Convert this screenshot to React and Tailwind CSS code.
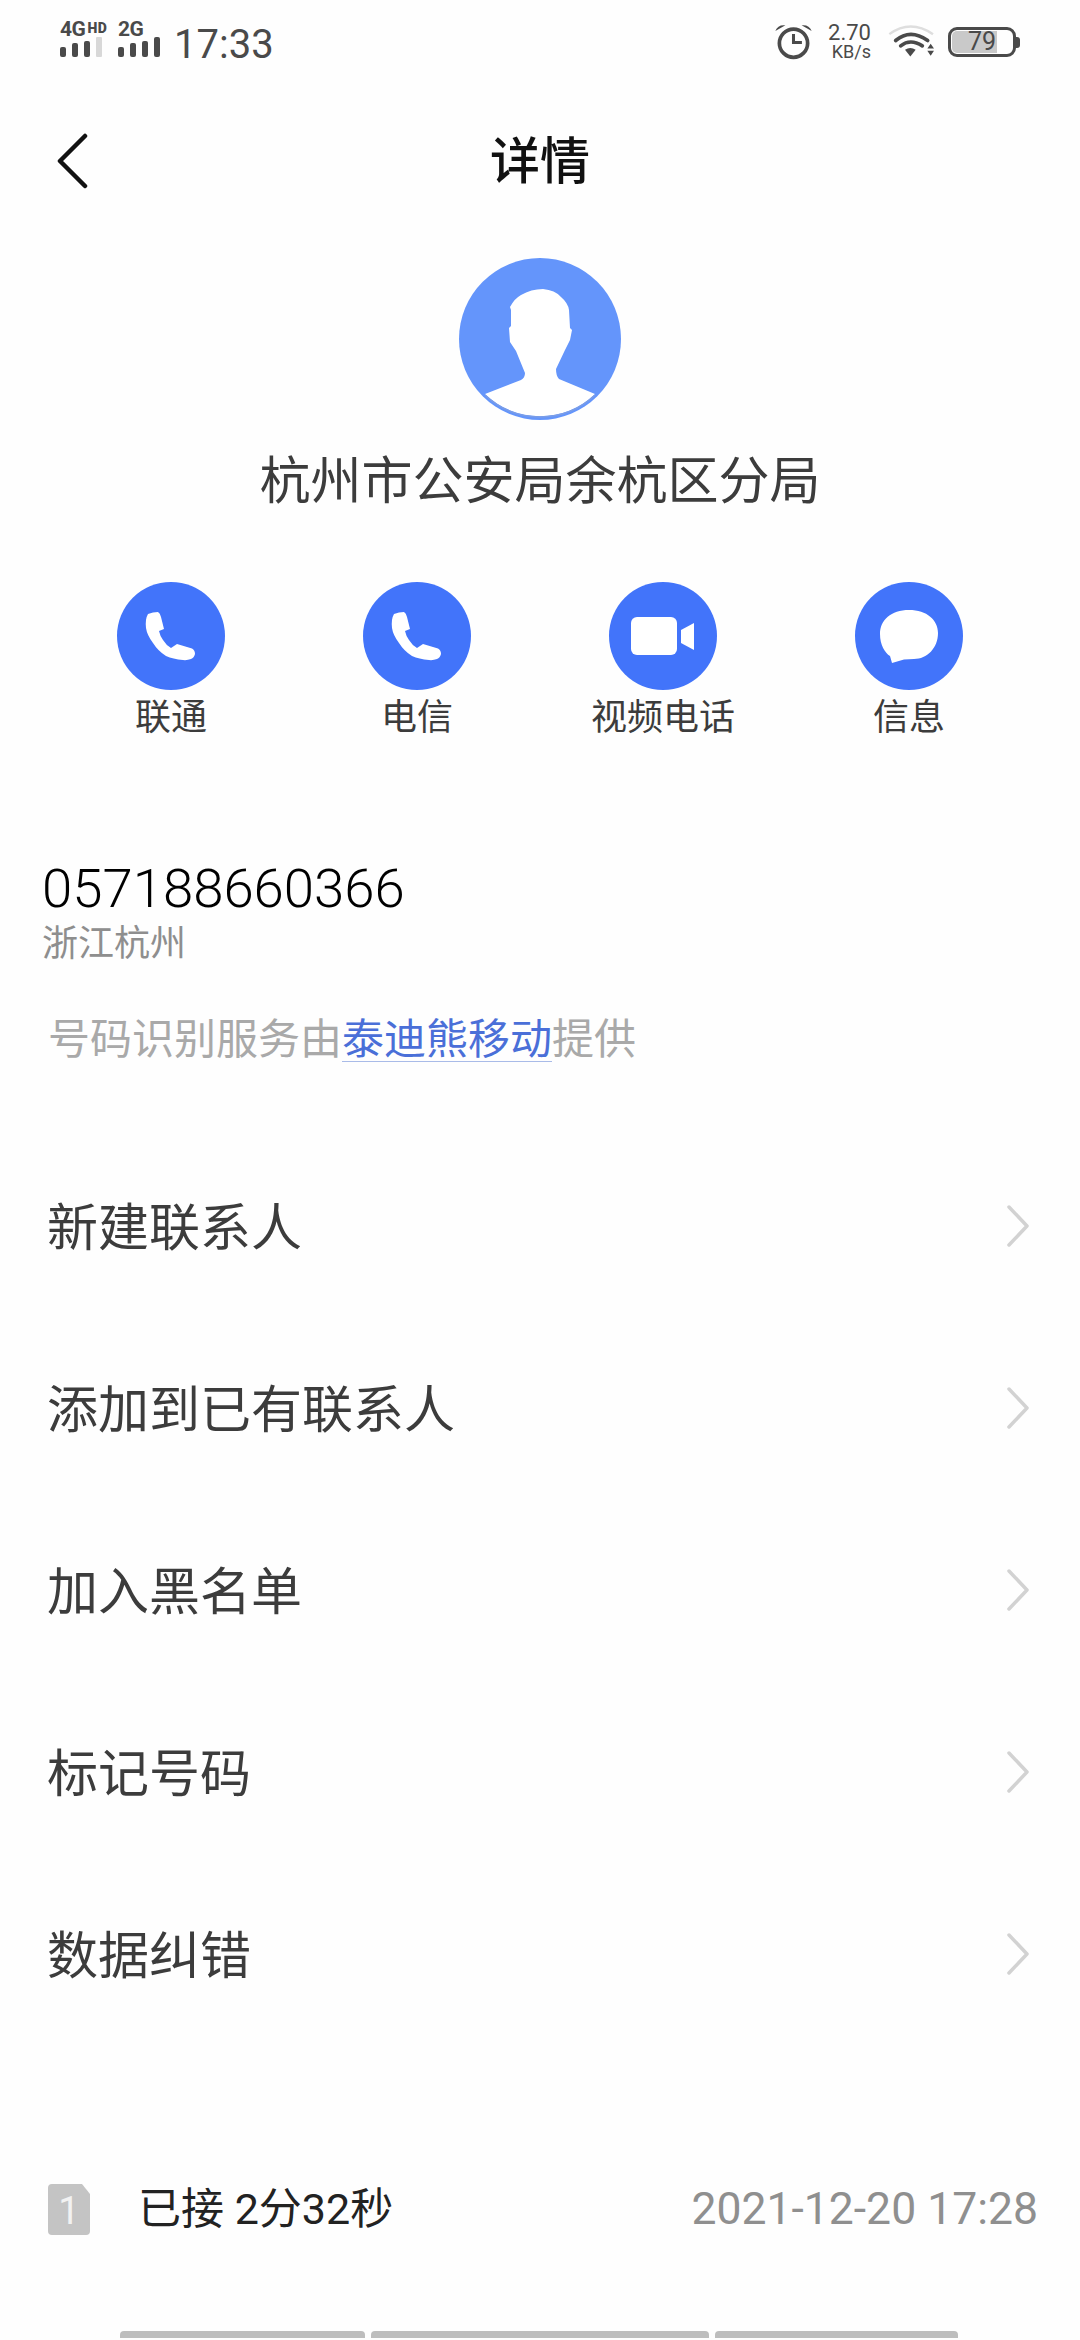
import React from 'react';

const CJK = "font-['Roboto','Noto_Sans_CJK_SC',sans-serif]";

const PhoneIcon = () => (
  <svg viewBox="0 0 108 108" className="w-[108px] h-[108px]">
    <path
      fill="#fff"
      d="M31 32 Q36 30 41 30 Q43 31 44 35 L47 47 L42 49 Q43 54 46 58 Q49 63 54 66 L60 62 L75 66.5 Q78 68 78 72 Q77 76 74 77 Q70 78.5 66 78 Q56 77 49 74 Q41 69 36 61 Q30 53 29 46 Q28 37 31 32 Z"
    />
  </svg>
);

const VideoIcon = () => (
  <svg viewBox="0 0 108 108" className="w-[108px] h-[108px]">
    <rect x="22" y="35" width="46" height="38" rx="6" fill="#fff" />
    <path d="M72 48 L85 41 V68 L72 61 Z" fill="#fff" />
  </svg>
);

const MessageIcon = () => (
  <svg viewBox="0 0 108 108" className="w-[108px] h-[108px]">
    <path
      fill="#fff"
      d="M54 28 C72 28 83 38 83 51 C83 66 72 77 59 77 L49 77.5 L37 81 L35 74 C30 71 25 63 25 52 C25 38 36 28 54 28 Z"
    />
  </svg>
);

const Avatar = () => (
  <svg viewBox="0 0 162 162" className="w-[162px] h-[162px]">
    <circle cx="81" cy="81" r="81" fill="#6495fb" />
    <path
      fill="#fff"
      d="M26 136 L62 122 Q66 120 66 115 L57 93 L51 84 L50 70 L52 68 L52 52 L51 49 Q56 40 62 37 Q72 31 84 31 Q96 32 102 39 Q109 45 110 52 L111 70 L113 72 L111 82 L106 92 L97 111 Q97 118 100 121 L136 136 A79 79 0 0 1 26 136 Z"
    />
    <path d="M26 137 A80 80 0 0 0 136 137" fill="none" stroke="#7b9de6" strokeWidth="1.5" />
  </svg>
);

const actions = [
  { label: '联通', icon: <PhoneIcon /> },
  { label: '电信', icon: <PhoneIcon /> },
  { label: '视频电话', icon: <VideoIcon /> },
  { label: '信息', icon: <MessageIcon /> },
];

const menu = ['新建联系人', '添加到已有联系人', '加入黑名单', '标记号码', '数据纠错'];

const Signal = ({ dim }) => (
  <div className="flex items-end gap-[6px] h-[20px]">
    <span className="w-[6px] h-[10px] rounded-[2px] bg-[#4a4a4a]" />
    <span className="w-[6px] h-[14px] rounded-[2px] bg-[#4a4a4a]" />
    <span className="w-[6px] h-[16px] rounded-[2px] bg-[#4a4a4a]" />
    <span className={dim ? 'w-[6px] h-[20px] rounded-[1px] bg-[#d8d8d8]' : 'w-[6px] h-[20px] rounded-[2px] bg-[#4a4a4a]'} />
  </div>
);

const StatusBar = () => (
  <div className="h-[80px] flex justify-between pt-[22px] pl-[60px] pr-[60px] text-[#4a4a4a] font-['Roboto',sans-serif]">
    <div className="flex items-start">
      <div className="w-[58px] flex flex-col">
        <div className="h-[15px] flex items-start font-bold leading-[15px]">
          <span className="text-[21px] tracking-[-0.5px]">4G</span>
          <span className="text-[14px] ml-[2px] font-black leading-[12px] tracking-[0.5px]">HD</span>
        </div>
        <Signal dim />
      </div>
      <div className="w-[58px] flex flex-col">
        <span className="h-[15px] text-[21px] font-bold leading-[15px] tracking-[-0.5px]">2G</span>
        <Signal />
      </div>
      <span className="text-[40px] leading-[42px] ml-[-2px] mt-[2px]">17:33</span>
    </div>

    <div className="flex items-start">
      <svg viewBox="165 70 110 110" className="w-[37px] h-[37px] mt-[1px]">
        <circle cx="220" cy="130" r="42" fill="none" stroke="#4a4a4a" strokeWidth="11" />
        <path d="M220 103 V128 H245" fill="none" stroke="#4a4a4a" strokeWidth="9" />
        <path d="M166 94 Q174 74 196 77 Z M274 94 Q266 74 244 77 Z" fill="#4a4a4a" />
      </svg>
      <div className="w-[47px] ml-[12px] flex flex-col items-end leading-none">
        <span className="text-[22px] leading-[22px]">2.70</span>
        <span className="text-[18px] leading-[18px] mt-[-1px]">KB/s</span>
      </div>
      <svg viewBox="500 70 150 110" className="w-[50px] h-[37px] ml-[16px]">
        <path d="M507 106 Q570 60 638 106" fill="none" stroke="#dedede" strokeWidth="7" />
        <path d="M526 125 Q570 88 622 125" fill="none" stroke="#4a4a4a" strokeWidth="11" strokeLinecap="round" />
        <path d="M541 141 Q570 118 606 141" fill="none" stroke="#4a4a4a" strokeWidth="11" strokeLinecap="round" />
        <path d="M554 153 Q570 142 586 153 L570 173 Z" fill="#4a4a4a" />
        <path d="M631 135 L641 149 H621 Z M631 171 L641 156 H621 Z" fill="#4a4a4a" />
      </svg>
      <div className="flex items-center ml-[11px] mt-[5px]">
        <div className="relative w-[68px] h-[30px] rounded-[9px] border-[3px] border-[#4a4a4a]">
          <div className="absolute left-[1px] top-[1px] w-[45px] h-[22px] rounded-l-[5px] bg-[#c9c9c9]" />
          <span className="absolute left-[17px] top-0 text-[25px] leading-[24px]">79</span>
        </div>
        <span className="w-[4px] h-[11px] rounded-r-[3px] bg-[#4a4a4a]" />
      </div>
    </div>
  </div>
);

export default function App() {
  return (
    <div className={`w-[1080px] h-[2340px] overflow-hidden bg-[#fefefe] ${CJK}`}>
      <StatusBar />

      {/* Title bar */}
      <div className="relative h-[160px] flex items-center justify-center">
        <svg viewBox="0 0 32 56" className="absolute left-[56px] top-[53px] w-[32px] h-[56px]">
          <path d="M29 3 L4 28 L29 53" fill="none" stroke="#111" strokeWidth="4.5" strokeLinecap="round" strokeLinejoin="round" />
        </svg>
        <h1 className="text-[50px] leading-[60px] pt-[3px] font-medium text-[#111]">详情</h1>
      </div>

      {/* Contact */}
      <div className="flex flex-col items-center mt-[18px]">
        <Avatar />
        <p className="text-[51px] leading-[62px] mt-[31px] text-[#3c3c3c]">杭州市公安局余杭区分局</p>
      </div>

      <div className="grid grid-cols-4 px-[48px] mt-[69px]">
        {actions.map((a) => (
          <div key={a.label} className="flex flex-col items-center">
            <div className="w-[108px] h-[108px] rounded-full bg-[#4274fa]">{a.icon}</div>
            <span className="text-[36px] leading-[56px] text-[#3c3c3c]">{a.label}</span>
          </div>
        ))}
      </div>

      {/* Number */}
      <div className="mt-[110px] pl-[42px]">
        <p className="text-[54.5px] leading-[64px] font-light text-black">057188660366</p>
        <p className="text-[36px] leading-[46px] mt-[1px] text-[#8e8e8e]">浙江杭州</p>
      </div>
      <p className="mt-[43px] pl-[48px] h-[60px] text-[42px] leading-[60px] text-[#a9a9a9]">
        号码识别服务由
        <span className="inline-block h-[52px] leading-[60px] text-[#4a6fd8] border-b border-[#a9bbe8]">泰迪熊移动</span>
        提供
      </p>

      {/* Menu rows */}
      <div className="mt-[68px]">
        {menu.map((item) => (
          <div key={item} className="h-[182px] flex items-center justify-between pl-[47px] pr-[50px]">
            <span className="text-[51px] leading-[60px] text-[#3c3c3c]">{item}</span>
            <svg viewBox="0 0 24 44" className="w-[24px] h-[44px] mb-[6px]">
              <path d="M3 3 L21 22 L3 41" fill="none" stroke="#d2d2d2" strokeWidth="3.5" strokeLinecap="round" strokeLinejoin="round" />
            </svg>
          </div>
        ))}
      </div>

      {/* Latest call */}
      <div className="mt-[121px] h-[80px] flex items-center pl-[48px] pr-[42px]">
        <div className="relative w-[42px] h-[51px]">
          <svg viewBox="0 0 42 51" className="w-[42px] h-[51px]">
            <path d="M4 0 H34 L42 10 V47 Q42 51 38 51 H4 Q0 51 0 47 V4 Q0 0 4 0 Z" fill="#c4c4c4" />
          </svg>
          <span className="absolute inset-0 text-center text-[38px] leading-[54px] text-[#f2f2f2]">1</span>
        </div>
        <span className="ml-[48px] text-[43px] leading-[60px] text-[#222]">已接 2分32秒</span>
        <span className="ml-auto text-[44.5px] leading-[60px] text-[#8f8f8f]">2021-12-20 17:28</span>
      </div>

      {/* Bottom actions, cut off by the screen edge */}
      <div className="mt-[82px] pl-[120px] flex gap-[6px]">
        <div className="w-[245px] h-[7px] rounded-t-[4px] bg-[#bdbdbd]" />
        <div className="w-[338px] h-[7px] rounded-t-[4px] bg-[#bdbdbd]" />
        <div className="w-[243px] h-[7px] rounded-t-[4px] bg-[#bdbdbd]" />
      </div>
    </div>
  );
}
